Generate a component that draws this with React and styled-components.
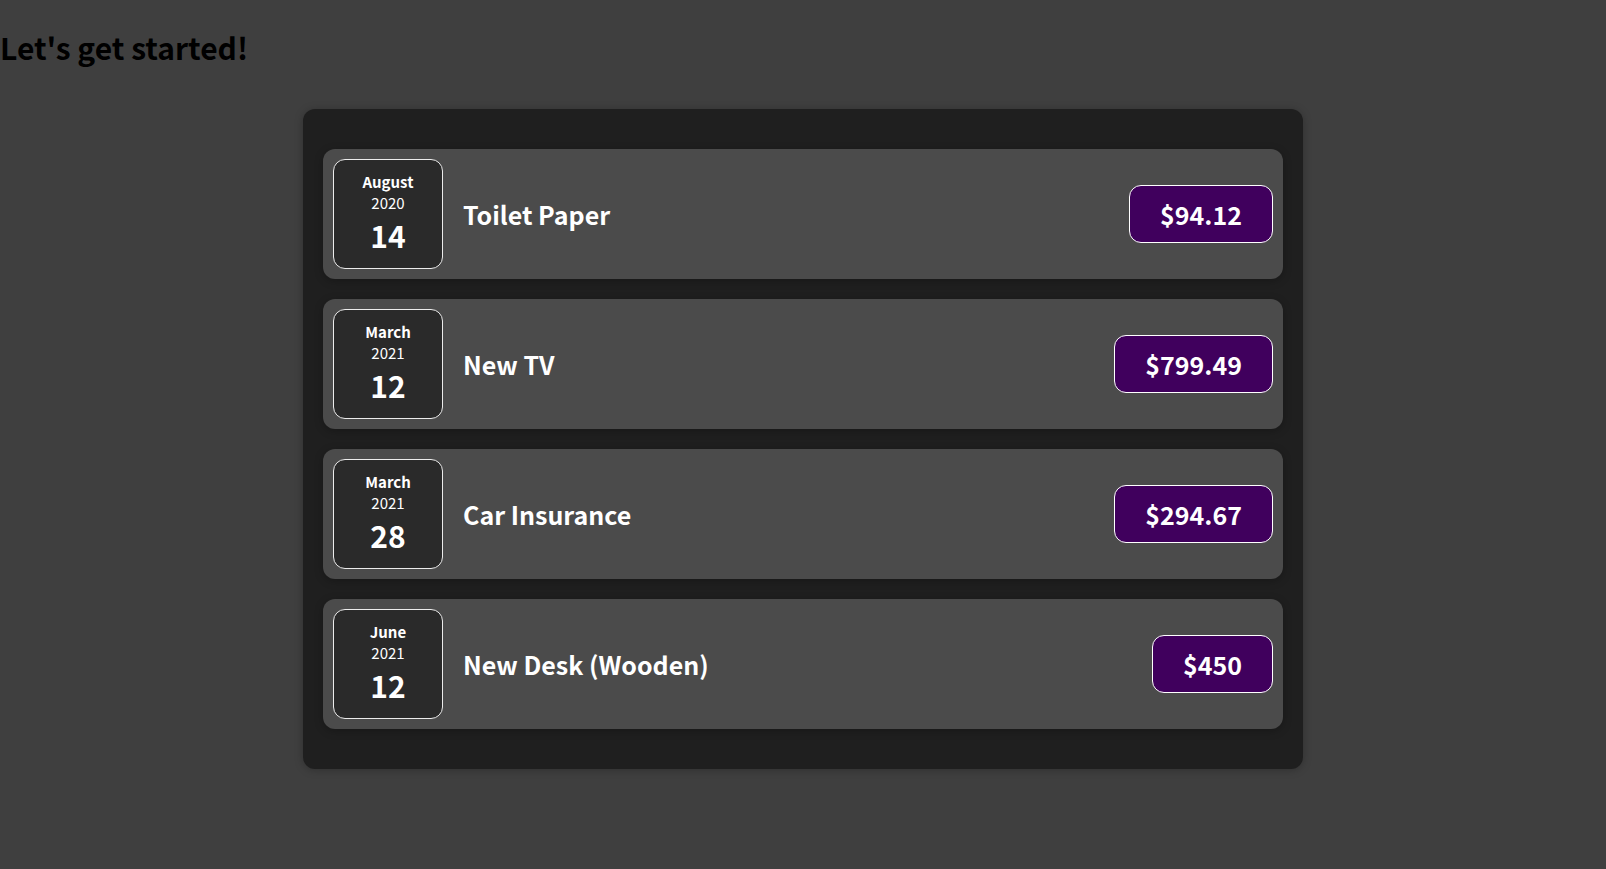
import React from "react";
import styled, { createGlobalStyle } from "styled-components";

const expenses = [
  { id: "e1", title: "Toilet Paper", amount: "94.12", month: "August", year: "2020", day: "14" },
  { id: "e2", title: "New TV", amount: "799.49", month: "March", year: "2021", day: "12" },
  { id: "e3", title: "Car Insurance", amount: "294.67", month: "March", year: "2021", day: "28" },
  { id: "e4", title: "New Desk (Wooden)", amount: "450", month: "June", year: "2021", day: "12" },
];

const GlobalStyle = createGlobalStyle`
  * {
    box-sizing: border-box;
  }

  html {
    font-family: "Noto Sans CJK JP", "Noto Sans", sans-serif;
    font-size: 20px;
  }

  body {
    margin: 0;
    background-color: #3f3f3f;
  }
`;

const Heading = styled.h2`
  font-size: 1.5rem;
  font-weight: 700;
  color: #000;
  margin: 0.83em 0;
`;

const Card = styled.div`
  border-radius: 12px;
  box-shadow: 0 1px 8px rgba(0, 0, 0, 0.25);
`;

const Expenses = styled(Card)`
  padding: 1rem;
  background-color: rgb(31, 31, 31);
  margin: 2rem auto;
  width: 50rem;
  max-width: 95%;
`;

const Item = styled(Card)`
  display: flex;
  justify-content: space-between;
  align-items: center;
  box-shadow: 0 2px 8px rgba(0, 0, 0, 0.25);
  padding: 0.5rem;
  margin: 1rem 0;
  background-color: #4b4b4b;
`;

const Description = styled.div`
  display: flex;
  flex-direction: row;
  align-items: center;
  justify-content: flex-start;
  flex: 1;
`;

const Title = styled.h2`
  font-size: 1.25rem;
  font-weight: 700;
  flex: 1;
  margin: 0 1rem;
  color: white;
`;

const Price = styled.div`
  font-size: 1.25rem;
  font-weight: bold;
  color: white;
  background-color: #40005d;
  border: 1px solid white;
  padding: 0.5rem 1.5rem;
  border-radius: 12px;
`;

const DateBox = styled.div`
  display: flex;
  flex-direction: column;
  width: 5.5rem;
  height: 5.5rem;
  border: 1px solid #ececec;
  background-color: #2a2a2a;
  color: white;
  border-radius: 12px;
  align-items: center;
  justify-content: center;
`;

const DatePart = styled.div`
  font-size: ${(props) => (props.big ? "1.5rem" : "0.75rem")};
  font-weight: ${(props) => (props.bold ? 700 : 400)};
`;

const ExpenseItem = ({ title, amount, month, year, day }) => {
  return (
    <Item>
      <DateBox>
        <DatePart bold>{month}</DatePart>
        <DatePart>{year}</DatePart>
        <DatePart big bold>
          {day}
        </DatePart>
      </DateBox>
      <Description>
        <Title>{title}</Title>
        <Price>${amount}</Price>
      </Description>
    </Item>
  );
};

const App = () => {
  return (
    <div>
      <GlobalStyle />
      <Heading>Let's get started!</Heading>
      <Expenses>
        {expenses.map((e) => (
          <ExpenseItem key={e.id} {...e} />
        ))}
      </Expenses>
    </div>
  );
};

export default App;
